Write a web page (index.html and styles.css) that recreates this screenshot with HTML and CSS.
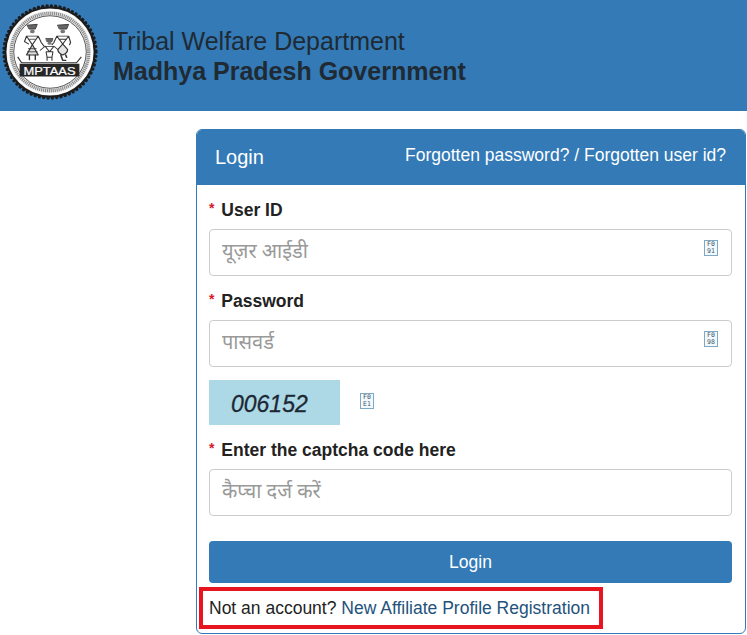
FILE: index.html
```html
<!DOCTYPE html>
<html lang="hi">
<head>
    <meta charset="UTF-8" />
    <title>Tribal Welfare Department</title>
    <link rel="stylesheet" href="styles.css">
</head>
<body>
    <header class="top-bar">
        <svg class="logo" viewBox="0 0 100 100" width="98" height="98" aria-label="MPTAAS">
            <!-- seal rings -->
            <circle cx="50" cy="50" r="47" fill="none" stroke="#1c1c1c" stroke-width="3.4" stroke-linecap="round" stroke-dasharray="0.1 4.35"/>
            <circle cx="50" cy="50" r="45.5" fill="#eee" stroke="#1c1c1c" stroke-width="2"/>
            <circle cx="50" cy="50" r="43" fill="none" stroke="#fff" stroke-width="1.6"/>
            <circle cx="50" cy="50" r="39.5" fill="none" stroke="#8a8a8a" stroke-width="3.4" stroke-dasharray="1.2 0.8"/>
            <circle cx="50" cy="50" r="37" fill="#fff" stroke="#444" stroke-width="0.9"/>
            <!-- figures -->
            <g transform="translate(0 9) scale(1 0.8)" fill="none" stroke="#333" stroke-linecap="round" stroke-linejoin="round">
                <path d="M27 17l10 -1 -2 6h-6z" fill="#666" stroke-width="1"/>
                <circle cx="32" cy="25" r="2.4" fill="#777" stroke="none"/>
                <path d="M26 31h12l-6 11zM26 31l-2 7 4 3M38 31l3 8 3 5" stroke-width="1.2"/>
                <path d="M32 42l-6 13h12z" fill="#ddd" stroke-width="1.2"/>
                <path d="M28 47h8M27 51h10M29 35h6" stroke-width="0.9"/>
                <path d="M29 55v6M35 55v6" stroke-width="1.4"/>

                <path d="M58 17l11 -1 -2 6h-7z" fill="#666" stroke-width="1"/>
                <circle cx="63" cy="25" r="2.4" fill="#777" stroke="none"/>
                <path d="M57 31h12l-6 10zM57 31l-3 8 -2 3M69 31l2 8 -1 3M59 35h8" stroke-width="1.2"/>
                <path d="M63 41l-5 7c0 4 3 6 5 7 2-1 5-3 5-7z" fill="#e4e4e4" stroke-width="1.3"/>
                <path d="M61 55l2 7h3M66 55l1 3" stroke-width="1.6"/>

                <path d="M46 34h7l-1 4h-5z" fill="#666" stroke-width="0.8"/>
                <circle cx="49.500" cy="40" r="2" fill="#777" stroke="none"/>
                <path d="M45 44h9l-4.500 7zM45 44l-5 5M54 44l4 4M46 51h7l-1 7h-5zM47 58v4M52 58v4" stroke-width="1.1"/>
            </g>
            <path class="logo-boat" d="M17 55l4 6h56l5 -6"/>
            <rect x="19" y="62" width="61" height="13" fill="#262626"/>
            <text class="logo-text" x="23" y="73" textLength="53" lengthAdjust="spacingAndGlyphs">MPTAAS</text>
        </svg>
        <div class="org-name">
            <div class="org-dept">Tribal Welfare Department</div>
            <div class="org-gov">Madhya Pradesh Government</div>
        </div>
    </header>

    <main class="login-panel">
        <div class="panel-head">
            <span class="panel-title">Login</span>
            <a class="panel-link" href="#">Forgotten password? / Forgotten user id?</a>
        </div>
        <form class="panel-body">
            <label class="field-label"><span class="req">*</span> User ID</label>
            <div class="input-box">
                <input class="text-input" type="text" placeholder="यूज़र आईडी">
                <span class="tofu"><i>F0</i><i>91</i></span>
            </div>

            <label class="field-label"><span class="req">*</span> Password</label>
            <div class="input-box">
                <input class="text-input" type="password" placeholder="पासवर्ड">
                <span class="tofu"><i>F0</i><i>98</i></span>
            </div>

            <div class="captcha-row">
                <div class="captcha-img">006152</div>
                <span class="tofu"><i>F0</i><i>E1</i></span>
            </div>

            <label class="field-label"><span class="req">*</span> Enter the captcha code here</label>
            <div class="input-box">
                <input class="text-input" type="text" placeholder="कैप्चा दर्ज करें">
            </div>

            <button class="login-btn" type="button">Login</button>
        </form>
        <div class="register-note">Not an account? <a href="#">New Affiliate Profile Registration</a></div>
    </main>
</body>
</html>
```

FILE: styles.css
```css
body {
    margin: 0;
    font-family: "Liberation Sans", Arial, "Noto Sans", sans-serif;
    color: #222;
    background: #fff;
}
.top-bar {
    display: flex;
    align-items: center;
    gap: 14px;
    height: 111px;
    padding: 0 0 8px 1px;
    box-sizing: border-box;
    background: #337ab7;
}
.logo {
    flex: none;
}
.logo-boat {
    fill: none;
    stroke: #333;
    stroke-width: 1.2;
}
.logo-text {
    font-family: "Liberation Sans", sans-serif;
    font-size: 12px;
    fill: #fff;
    stroke: #fff;
    stroke-width: 0.25px;
}
.org-name {
    font-size: 25px;
    line-height: 30px;
    color: #1f2a33;
    padding-top: 8px;
}
.org-gov {
    font-weight: 700;
}
.login-panel {
    width: 550px;
    height: 505px;
    box-sizing: border-box;
    margin: 18px 0 0 196px;
    border: 1px solid #337ab7;
    border-radius: 6px;
    overflow: hidden;
}
.panel-head {
    display: flex;
    justify-content: space-between;
    align-items: center;
    height: 55px;
    padding: 0 19px 0 18px;
    background: #337ab7;
    color: #fff;
}
.panel-title {
    font-size: 20px;
}
.panel-link {
    font-size: 17.5px;
    color: #fff;
    text-decoration: none;
    margin-bottom: 5px;
}
.panel-body {
    padding: 15px 13px 0 12px;
}
.field-label {
    display: block;
    font-size: 17.5px;
    font-weight: 700;
    line-height: 20px;
    margin-bottom: 9px;
}
.req {
    color: #d9182a;
    font-weight: 700;
    font-size: 14px;
    line-height: 0;
    vertical-align: 3px;
    margin-right: 2px;
}
.input-box {
    display: flex;
    align-items: center;
    height: 47px;
    box-sizing: border-box;
    border: 1px solid #ccc;
    border-radius: 4px;
    padding: 0 13px 5px 12px;
    margin-bottom: 15px;
}
.text-input {
    flex: 1;
    min-width: 0;
    border: none;
    outline: none;
    padding: 0;
    font-family: "Noto Sans", "Liberation Sans", sans-serif;
    font-size: 20px;
    color: #555;
}
.text-input::placeholder {
    color: #999;
    opacity: 1;
}
.tofu {
    display: inline-flex;
    flex-direction: column;
    align-items: center;
    justify-content: center;
    width: 14px;
    height: 16px;
    margin-bottom: 4px;
    box-sizing: border-box;
    border: 1px solid #7fa8c4;
    background: #f2f8fb;
}
.tofu i {
    font-family: "DejaVu Sans Mono", monospace;
    font-style: normal;
    font-size: 6.500px;
    line-height: 7px;
    color: #3d5666;
}
.captcha-row {
    display: flex;
    align-items: center;
    gap: 20px;
    margin-top: -2px;
    margin-bottom: 15px;
}
.captcha-img {
    width: 131px;
    height: 45px;
    line-height: 48px;
    padding-left: 22px;
    box-sizing: border-box;
    background: #add8e6;
    font-size: 23px;
    font-style: italic;
    color: #1c2833;
    -webkit-text-stroke: 0.3px #1c2833;
}
.login-btn {
    display: block;
    width: 100%;
    height: 42px;
    margin-top: 25px;
    border: none;
    border-radius: 4px;
    background: #337ab7;
    color: #fff;
    font-family: inherit;
    font-size: 17.5px;
}
.register-note {
    width: 404px;
    height: 42px;
    box-sizing: border-box;
    margin: 4px 0 0 2px;
    padding-left: 6px;
    border: 4px solid #e8141f;
    font-size: 17.5px;
    line-height: 34px;
}
.register-note a {
    color: #23527c;
    text-decoration: none;
}
```
